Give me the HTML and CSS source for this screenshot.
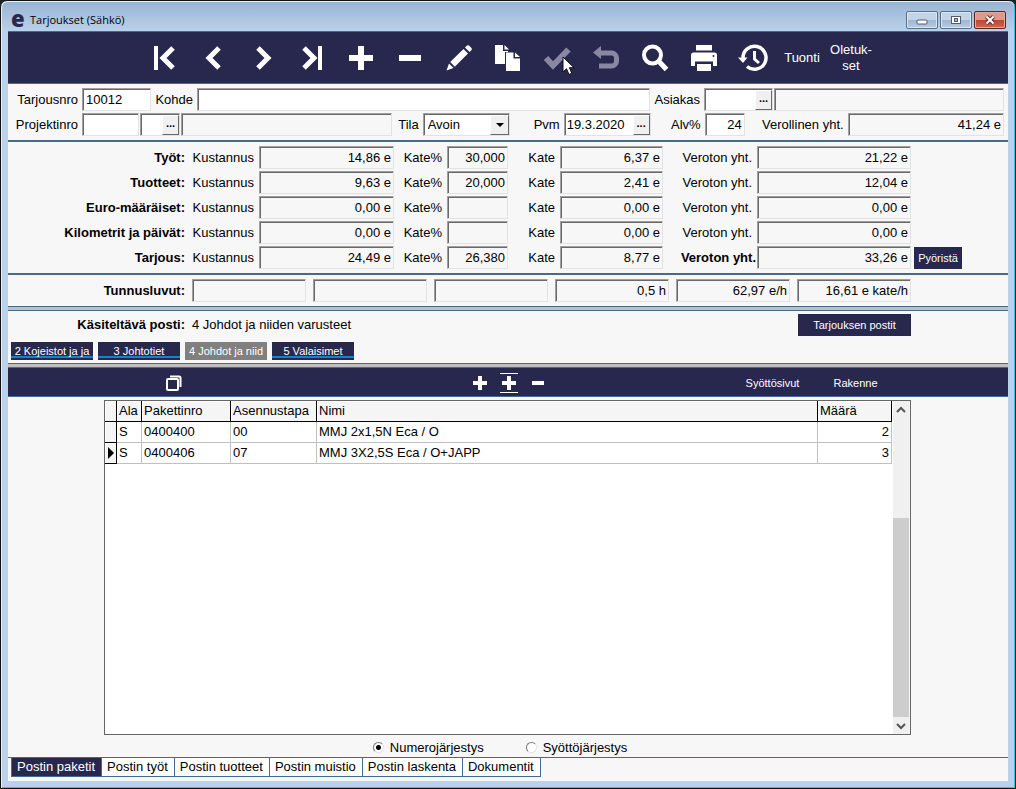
FILE: index.html
```
<!DOCTYPE html>
<html lang="fi">
<head>
    <meta charset="UTF-8">
    <meta name="viewport" content="width=device-width, initial-scale=1.0">
    <title>Tarjoukset (Sähkö)</title>
    <link rel="stylesheet" href="styles.css">
</head>
<body>
    <div class="window">
        <header class="titlebar">
            <span class="logo">e</span>
            <h1>Tarjoukset (Sähkö)</h1>
            <div class="window-buttons">
                <button aria-label="Pienennä"><svg width="12" height="10"><rect x="1" y="5" width="10" height="4" rx="1" fill="#fff" stroke="#535c69"/></svg></button>
                <button aria-label="Suurenna"><svg width="12" height="10"><rect x="1.5" y="1.5" width="9" height="7" fill="#fff" stroke="#535c69"/><rect x="4.5" y="3.5" width="3" height="3" fill="#9db5d0" stroke="#535c69"/></svg></button>
                <button class="close" aria-label="Sulje"><svg width="12" height="10"><path d="M2.500 1.500l7 7M9.500 1.500l-7 7" stroke="#5a3038" stroke-width="4"/><path d="M2.500 1.500l7 7M9.500 1.500l-7 7" stroke="#fff" stroke-width="2"/></svg></button>
            </div>
        </header>

        <nav class="toolbar">
            <button aria-label="Ensimmäinen"><svg width="28" height="28" viewBox="0 0 28 28"><path d="M5 2v24" stroke-width="4"/><path d="M22 4L12 14l10 10" stroke-width="5"/></svg></button>
            <button aria-label="Edellinen"><svg width="28" height="28" viewBox="0 0 28 28"><path d="M19 4L9 14l10 10" stroke-width="5"/></svg></button>
            <button aria-label="Seuraava"><svg width="28" height="28" viewBox="0 0 28 28"><path d="M9 4l10 10L9 24" stroke-width="5"/></svg></button>
            <button aria-label="Viimeinen"><svg width="28" height="28" viewBox="0 0 28 28"><path d="M6 4l10 10L6 24" stroke-width="5"/><path d="M22 2v24" stroke-width="4"/></svg></button>
            <button aria-label="Lisää"><svg width="28" height="28" viewBox="0 0 28 28"><path d="M14 2v24M2 14h24" stroke-width="6"/></svg></button>
            <button aria-label="Poista"><svg width="28" height="28" viewBox="0 0 28 28"><path d="M3 14h22" stroke-width="6"/></svg></button>
            <button aria-label="Muokkaa"><svg width="28" height="28" viewBox="0 0 28 28"><path class="solid" d="M1.500 26.500l2.500-7 4.500 4.500zM5.200 18L18.500 5l4.500 4.500L9.800 22.700zM20 3.600l2-2q1-.8 2 0l2.500 2.500q.8 1 0 2l-2 2z"/></svg></button>
            <button aria-label="Kopioi"><svg width="28" height="28" viewBox="0 0 28 28"><path class="solid" d="M1 1h8v6h5v1h-3v12H1zM10.500 1l4.500 4.500h-4.500z"/><path class="solid" d="M12 8.500h7.500v6h6.500V27H12zM21 8.500l5 4.500h-5z"/></svg></button>
            <button class="dimmed" aria-label="Hyväksy"><svg width="28" height="28" viewBox="0 0 28 28"><path d="M3 14l7 7.500L25.500 5.500" stroke-width="6"/></svg><svg class="cursor" width="14" height="20" viewBox="0 0 14 20"><path d="M1 1v15l3.500-3.300L7 18.500l2.800-1.200L7.400 11.700H12z"/></svg></button>
            <button class="dimmed" aria-label="Peru"><svg width="28" height="28" viewBox="0 0 28 28"><path class="solid" d="M1 8.500L9 2v13z"/><path d="M8 9h11.500a5 5 0 0 1 5 5v3a5 5 0 0 1-5 5H7" stroke-width="5"/></svg></button>
            <button aria-label="Etsi"><svg width="28" height="28" viewBox="0 0 28 28"><circle cx="11.500" cy="11" r="8.500" stroke-width="4"/><path d="M17.500 17l8 8.500" stroke-width="5"/></svg></button>
            <button aria-label="Tulosta"><svg width="28" height="28" viewBox="0 0 28 28"><path class="solid" d="M6 1h16v5.500H6zM3.500 8.500h21q2.500 0 2.500 2.500v11h-4v-4.500H5V22H1V11q0-2.500 2.500-2.500zM7 20h14v7H7z"/><circle cx="23.500" cy="12" r="1" class="hole"/></svg></button>
            <button aria-label="Historia"><svg width="30" height="28" viewBox="0 0 30 28"><path d="M5 14A11.500 11.500 0 1 1 9 22.500" stroke-width="3.500"/><path d="M16.500 7v8l4.500 4" stroke-width="3"/><path class="solid" d="M0 13.500h9.500L5 19z"/></svg></button>
            <button class="text">Tuonti</button>
            <button class="text">Oletuk-<br>set</button>
        </nav>

        <form class="offer">
            <div class="row">
                <label class="first" for="tarjousnro">Tarjousnro</label>
                <input class="field w69" id="tarjousnro" value="10012">
                <label class="w46" for="kohde">Kohde</label>
                <input class="field kohde" id="kohde">
                <label class="w54" for="asiakas">Asiakas</label>
                <div class="picker w69">
                    <input id="asiakas">
                    <button type="button" aria-label="Valitse asiakas">...</button>
                </div>
                <input class="field readonly asiakas gap-left" aria-label="Asiakkaan nimi" readonly>
            </div>
            <div class="row">
                <label class="first" for="projektinro">Projektinro</label>
                <input class="field w57" id="projektinro">
                <div class="picker w40 gap-left">
                    <input aria-label="Projektin osa">
                    <button type="button" aria-label="Valitse projekti">...</button>
                </div>
                <input class="field readonly projekti gap-left" aria-label="Projektin nimi" readonly>
                <label class="w31" for="tila">Tila</label>
                <div class="select w87">
                    <select id="tila">
                        <option>Avoin</option>
                    </select>
                </div>
                <label class="w54" for="pvm">Pvm</label>
                <div class="picker w87">
                    <input id="pvm" value="19.3.2020">
                    <button type="button" aria-label="Valitse päivä">...</button>
                </div>
                <label class="w54" for="alv">Alv%</label>
                <input class="field num w40" id="alv" value="24">
                <label class="w103" for="verollinen">Verollinen yht.</label>
                <input class="field readonly num verollinen" id="verollinen" value="41,24 e" readonly>
            </div>
        </form>

        <section class="totals">
            <strong>Työt:</strong>
            <label for="k1">Kustannus</label><input class="field readonly num" id="k1" value="14,86 e" readonly>
            <label for="p1">Kate%</label><input class="field readonly num" id="p1" value="30,000" readonly>
            <label for="c1">Kate</label><input class="field readonly num" id="c1" value="6,37 e" readonly>
            <label for="v1">Veroton yht.</label><input class="field readonly num" id="v1" value="21,22 e" readonly>

            <strong>Tuotteet:</strong>
            <label for="k2">Kustannus</label><input class="field readonly num" id="k2" value="9,63 e" readonly>
            <label for="p2">Kate%</label><input class="field readonly num" id="p2" value="20,000" readonly>
            <label for="c2">Kate</label><input class="field readonly num" id="c2" value="2,41 e" readonly>
            <label for="v2">Veroton yht.</label><input class="field readonly num" id="v2" value="12,04 e" readonly>

            <strong>Euro-määräiset:</strong>
            <label for="k3">Kustannus</label><input class="field readonly num" id="k3" value="0,00 e" readonly>
            <label for="p3">Kate%</label><input class="field readonly num" id="p3" readonly>
            <label for="c3">Kate</label><input class="field readonly num" id="c3" value="0,00 e" readonly>
            <label for="v3">Veroton yht.</label><input class="field readonly num" id="v3" value="0,00 e" readonly>

            <strong>Kilometrit ja päivät:</strong>
            <label for="k4">Kustannus</label><input class="field readonly num" id="k4" value="0,00 e" readonly>
            <label for="p4">Kate%</label><input class="field readonly num" id="p4" readonly>
            <label for="c4">Kate</label><input class="field readonly num" id="c4" value="0,00 e" readonly>
            <label for="v4">Veroton yht.</label><input class="field readonly num" id="v4" value="0,00 e" readonly>

            <strong>Tarjous:</strong>
            <label for="k5">Kustannus</label><input class="field readonly num" id="k5" value="24,49 e" readonly>
            <label for="p5">Kate%</label><input class="field readonly num" id="p5" value="26,380" readonly>
            <label for="c5">Kate</label><input class="field readonly num" id="c5" value="8,77 e" readonly>
            <label class="total" for="v5">Veroton yht.</label><input class="field readonly num" id="v5" value="33,26 e" readonly>
            <button class="dark-btn round-btn">Pyöristä</button>
        </section>

        <section class="figures">
            <strong>Tunnusluvut:</strong>
            <input class="field readonly num" aria-label="Tunnusluku 1" readonly>
            <input class="field readonly num" aria-label="Tunnusluku 2" readonly>
            <input class="field readonly num" aria-label="Tunnusluku 3" readonly>
            <input class="field readonly num" aria-label="Tunnit" value="0,5 h" readonly>
            <input class="field readonly num" aria-label="Tuntihinta" value="62,97 e/h" readonly>
            <input class="field readonly num" aria-label="Kate tunnissa" value="16,61 e kate/h" readonly>
        </section>

        <div class="splitter"></div>

        <section class="post">
            <div class="post-head">
                <strong>Käsiteltävä posti:</strong>
                <span>4 Johdot ja niiden varusteet</span>
                <button class="dark-btn posts-btn">Tarjouksen postit</button>
            </div>
            <div class="post-buttons">
                <button>2 Kojeistot ja ja</button>
                <button>3 Johtotiet</button>
                <button class="current">4 Johdot ja niid</button>
                <button>5 Valaisimet</button>
            </div>
        </section>

        <div class="splitter"></div>

        <nav class="subbar">
            <div class="left">
                <button aria-label="Monista"><svg width="16" height="16" viewBox="0 0 16 16"><path d="M4 1.500h9q1.500 0 1.500 1.500v9" stroke-width="2"/><rect x="1" y="4" width="11" height="11" rx="1" stroke-width="2"/></svg></button>
            </div>
            <div class="middle">
                <button aria-label="Lisää rivi"><svg width="18" height="20" viewBox="0 0 18 20"><path d="M9 3v14M2 10h14" stroke-width="4"/></svg></button>
                <button aria-label="Lisää väliin"><svg width="18" height="20" viewBox="0 0 18 20"><path d="M9 3v14M2 10h14" stroke-width="4"/><path d="M0 .5h18M0 19.500h18" stroke-width="1"/></svg></button>
                <button aria-label="Poista rivi"><svg width="18" height="20" viewBox="0 0 18 20"><path d="M3 10h12" stroke-width="4"/></svg></button>
            </div>
            <div class="right">
                <button>Syöttösivut</button>
                <button>Rakenne</button>
            </div>
        </nav>

        <main>
            <div class="grid-box">
                <div class="grid-scroll">
                    <table>
                        <colgroup>
                            <col class="c-mark"><col class="c-ala"><col class="c-nro"><col class="c-tapa"><col><col class="c-maara">
                        </colgroup>
                        <thead>
                            <tr>
                                <th></th>
                                <th>Ala</th>
                                <th>Pakettinro</th>
                                <th>Asennustapa</th>
                                <th>Nimi</th>
                                <th>Määrä</th>
                            </tr>
                        </thead>
                        <tbody>
                            <tr>
                                <td class="mark"></td>
                                <td>S</td>
                                <td>0400400</td>
                                <td>00</td>
                                <td>MMJ 2x1,5N Eca / O</td>
                                <td class="num">2</td>
                            </tr>
                            <tr>
                                <td class="mark"><svg width="6" height="12" viewBox="0 0 6 12"><path d="M0 0l6 6-6 6z"/></svg></td>
                                <td>S</td>
                                <td>0400406</td>
                                <td>07</td>
                                <td>MMJ 3X2,5S Eca / O+JAPP</td>
                                <td class="num">3</td>
                            </tr>
                        </tbody>
                    </table>
                </div>
                <div class="scrollbar">
                    <svg width="16" height="17" viewBox="0 0 16 17"><path d="M4 11l4-4 4 4"/></svg>
                    <div class="track"></div>
                    <div class="thumb"></div>
                    <svg width="16" height="17" viewBox="0 0 16 17"><path d="M4 7l4 4 4-4"/></svg>
                </div>
            </div>

            <div class="order">
                <label><input type="radio" name="order" checked>Numerojärjestys</label>
                <label><input type="radio" name="order">Syöttöjärjestys</label>
            </div>
        </main>

        <footer class="tabs">
            <button class="active">Postin paketit</button>
            <button>Postin työt</button>
            <button>Postin tuotteet</button>
            <button>Postin muistio</button>
            <button>Postin laskenta</button>
            <button>Dokumentit</button>
        </footer>
    </div>
</body>
</html>
```
FILE: styles.css
```
* {
    box-sizing: border-box;
}
body {
    margin: 0;
    background-color: #222;
    font-family: "Liberation Sans", Arial, sans-serif;
    font-size: 13px;
    line-height: 16px;
    color: #000;
}
button, input, select {
    font: inherit;
    color: inherit;
    margin: 0;
    padding: 0;
    min-width: 0;
}
button {
    border: none;
    background: none;
    white-space: nowrap;
}
.window {
    display: flex;
    flex-direction: column;
    min-height: 100vh;
    padding: 1px 7px 7px;
    border: 1px solid #111;
    border-radius: 7px 7px 0 0;
    background-color: #bad1ea;
    box-shadow: inset 1px 1px 0 #e6f0fa, inset -1px -1px 0 #30c4e0;
}

/* title bar */
.titlebar {
    display: flex;
    align-items: center;
    height: 29px;
    margin: 0 -6px;
    padding: 6px 8px 0 9px;
    border-radius: 6px 6px 0 0;
    background: linear-gradient(#99b4d3, #b9d1ea);
}
.titlebar h1 {
    flex: 1;
    margin: 0 0 0 6px;
    font: 11px/16px "Open Sans", "Noto Sans", sans-serif;
}
.logo {
    width: 13px;
    font: 800 22px/18px "Open Sans", sans-serif;
    color: #28284f;
    margin-top: -4px;
}
.window-buttons {
    display: flex;
    gap: 2px;
}
.window-buttons button {
    display: flex;
    align-items: center;
    justify-content: center;
    width: 32px;
    height: 18px;
    border: 1px solid #5c708c;
    border-radius: 2px;
    background: linear-gradient(#c3d4e8 48%, #9db5d0 50%, #b9cde4);
    box-shadow: inset 0 0 0 1px #d8e5f2;
}
.window-buttons .close {
    border-color: #5e2626;
    background: linear-gradient(#dd9a8a 48%, #bd4531 50%, #cf6a50);
    box-shadow: inset 0 0 0 1px #e3a99c;
}

/* main toolbar */
.toolbar {
    display: flex;
    justify-content: center;
    height: 53px;
    border-top: 1px solid #456a90;
    border-bottom: 1px solid #456a90;
    background-color: #28284f;
    color: #fff;
}
.toolbar button {
    position: relative;
    display: flex;
    align-items: center;
    justify-content: center;
    width: 49px;
}
.toolbar svg, .subbar svg {
    fill: none;
    stroke: #fff;
}
.toolbar .solid {
    fill: #fff;
    stroke: none;
}
.toolbar .hole {
    fill: #28284f;
    stroke: none;
}
.toolbar .dimmed svg {
    stroke: #8988a3;
}
.toolbar .dimmed .solid {
    fill: #8988a3;
}
.toolbar .dimmed .cursor {
    position: absolute;
    left: 29px;
    top: 24px;
    fill: #fff;
    stroke: #111;
}

/* fields */
.field, .picker, .select {
    height: 23px;
    border: 1px solid;
    border-color: #a0a0a0 #e3e3e3 #e3e3e3 #a0a0a0;
    border-radius: 0;
    background-color: #fff;
    box-shadow: inset 1px 1px 0 #696969;
}
.field {
    padding: 2px 2px 2px 3px;
    outline: none;
}
.readonly {
    background-color: #f7f7f7;
}
.num {
    text-align: right;
}
.picker, .select {
    position: relative;
    display: flex;
    padding: 1px 0 0 1px;
}
.picker input {
    flex: 1;
    padding: 0 0 1px 1px;
    border: none;
    background: none;
}
.picker button {
    width: 17px;
    padding-bottom: 5px;
    border: 1px solid;
    border-color: #fff #696969 #696969 #fff;
    background-color: #f0f0f0;
    font-size: 11px;
    font-weight: bold;
    line-height: 8px;
}
.select select {
    flex: 1;
    appearance: none;
    padding-left: 3px;
    border: none;
    border-radius: 0;
    background: none;
}
.select::before {
    content: "";
    position: absolute;
    top: 1px;
    right: 0;
    bottom: 0;
    width: 17px;
    border: 1px solid;
    border-color: #fff #696969 #696969 #fff;
    background-color: #f0f0f0;
    pointer-events: none;
}
.select::after {
    content: "";
    position: absolute;
    top: 9px;
    right: 5px;
    border: 4px solid transparent;
    border-top-color: #000;
    border-bottom: none;
    pointer-events: none;
}

.offer {
    display: flex;
    flex-direction: column;
    gap: 2px;
    padding: 4px 4px 4px 0;
    border-bottom: 2px solid #456a90;
    background-color: #f7f7f7;
}
.row {
    display: flex;
}
.row label {
    flex: none;
    padding: 4px 4px 0 0;
    text-align: right;
    white-space: nowrap;
}
.row .first { width: 74px; }
.w31 { width: 31px; }
.w40 { width: 40px; }
.w46 { width: 46px; }
.w54 { width: 54px; }
.w57 { width: 57px; }
.w69 { width: 69px; }
.w87 { width: 87px; }
.w103 { width: 103px; }
.w40, .w57, .w69, .w87 { flex: none; }
.kohde { flex: 2; }
.asiakas { flex: 1; }
.projekti { flex: 15; }
.verollinen { flex: 11; }
.gap-left { margin-left: 1px; }

.totals {
    display: grid;
    grid-template-columns: 177px 74px 135px 53px 61px 52px 103px 94px 154px auto;
    row-gap: 2px;
    padding: 4px 0;
    border-bottom: 2px solid #456a90;
    background-color: #f7f7f7;
}
.totals strong {
    grid-column: 1;
}
.totals strong, .totals label {
    padding-top: 4px;
    text-align: right;
}
.totals label {
    padding-right: 5px;
    white-space: nowrap;
}
.totals .total {
    padding-right: 1px;
    font-weight: bold;
}
.dark-btn {
    height: 22px;
    background-color: #28284f;
    color: #fff;
    font-size: 11px;
}
.round-btn {
    width: 48px;
    margin-left: 3px;
    margin-top: 1px;
}

.figures {
    display: flex;
    gap: 7px;
    padding: 4px 0;
    background-color: #f7f7f7;
}
.figures strong {
    width: 177px;
    padding-top: 4px;
    text-align: right;
}
.figures .field {
    width: 114px;
}
.splitter {
    height: 5px;
    border-top: 1px solid #456a90;
    border-bottom: 1px solid #456a90;
    background-color: #c0c0c0;
}

.post {
    padding: 3px 0;
    background-color: #f7f7f7;
}
.post-head {
    display: flex;
    gap: 7px;
    align-items: center;
    margin-bottom: 6px;
}
.post-head strong {
    width: 177px;
    text-align: right;
}
.post-head span {
    flex: 1;
}
.posts-btn {
    width: 113px;
    margin-right: 97px;
}
.post-buttons {
    display: flex;
    gap: 5px;
    padding-left: 3px;
}
.post-buttons button {
    width: 82px;
    height: 18px;
    background-color: #28284f;
    box-shadow: inset 0 -2px 0 #28284f, inset 0 -4px 0 #0a86cf;
    color: #fff;
    font-size: 11px;
}
.post-buttons .current {
    background-color: #808080;
    box-shadow: none;
}

.subbar {
    display: grid;
    grid-template-columns: 1fr auto 1fr;
    height: 29px;
    padding: 2px 0 0 1px;
    border-bottom: 1px solid #456a90;
    background-color: #28284f;
    color: #fff;
    font-size: 11px;
}
.subbar div {
    display: flex;
}
.subbar button {
    display: flex;
    align-items: center;
    justify-content: center;
    width: 29px;
}
.subbar .left {
    padding-left: 150px;
}
.subbar .right {
    justify-content: flex-end;
    padding-right: 111px;
}
.subbar .right button {
    width: 83px;
}

/* package grid */
main {
    flex: 1;
    display: flex;
    flex-direction: column;
    padding-top: 3px;
    background-color: #f7f7f7;
}
.grid-box {
    flex: 1;
    display: flex;
    margin: 0 97px 0 96px;
    border: 1px solid #666;
    background-color: #fff;
}
.grid-scroll {
    flex: 1;
}
table {
    width: 100%;
    table-layout: fixed;
    border-collapse: separate;
    border-spacing: 0;
}
.c-mark { width: 12px; }
.c-ala { width: 25px; }
.c-nro { width: 89px; }
.c-tapa { width: 86px; }
.c-maara { width: 74px; }
th, td {
    height: 21px;
    padding: 0 2px;
    border-right: 1px solid #c0c0c0;
    border-bottom: 1px solid #c0c0c0;
    font-weight: normal;
    text-align: left;
    white-space: nowrap;
}
th, .mark {
    border-color: #000;
    background-color: #f5f5f5;
    box-shadow: inset 1px 1px 0 #fff;
}
.mark {
    padding: 0 0 0 3px;
}
.mark svg {
    display: block;
}
td.num {
    text-align: right;
}
.scrollbar {
    display: flex;
    flex-direction: column;
    width: 17px;
    border-right: 1px solid #f7f7f7;
    margin-left: 1px;
    background-color: #f0f0f0;
}
.scrollbar svg {
    flex: none;
    fill: none;
    stroke: #555;
    stroke-width: 2;
}
.track {
    flex: 1;
}
.thumb {
    flex: 2;
    background-color: #cdcdcd;
}

.order {
    display: flex;
    justify-content: center;
    align-items: center;
    gap: 42px;
    height: 22px;
    padding: 3px 16px 0 0;
}
.order label {
    display: flex;
    align-items: center;
    gap: 6px;
}
.order input {
    appearance: none;
    width: 11px;
    height: 11px;
    border: 1px solid;
    border-color: #777 #e3e3e3 #e3e3e3 #777;
    border-radius: 50%;
    background-color: #fff;
}
.order input:checked {
    background-image: radial-gradient(circle, #000 2px, transparent 3px);
}

.tabs {
    display: flex;
    height: 24px;
    padding: 0 0 4px 3px;
    border-top: 1px solid #456a90;
    background-color: #f7f7f7;
}
.tabs button {
    padding: 0 6px 0 5px;
    border: 1px solid #456a90;
    border-width: 0 1px 1px 0;
    background-color: #fff;
}
.tabs .active {
    border-left-width: 1px;
    background-color: #28284f;
    color: #fff;
}
```
